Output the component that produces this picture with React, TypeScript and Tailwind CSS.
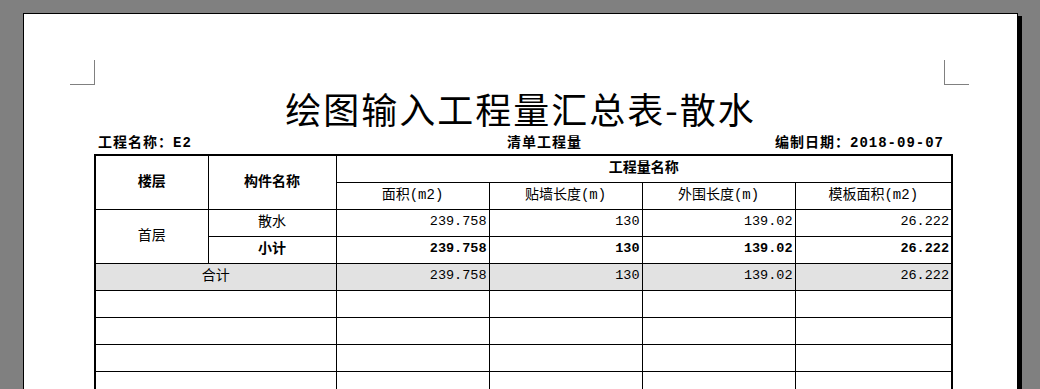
const mono = "font-['Liberation_Mono','Noto_Sans_CJK_SC',monospace]";

type Row = { values: string[] };

const firstFloor: Row = { values: ["239.758", "130", "139.02", "26.222"] };
const units = ["面积(m2)", "贴墙长度(m)", "外围长度(m)", "模板面积(m2)"];

function NumberCells({ values, bold }: { values: string[]; bold?: boolean }) {
  return (
    <>
      {values.map((v, i) => (
        <td key={i} className={`border border-black pr-[2px] text-right text-[13.5px] ${bold ? "font-bold" : ""}`}>
          {v}
        </td>
      ))}
    </>
  );
}

function CornerMark({ side }: { side: "left" | "right" }) {
  return (
    <div
      className={`h-[25px] w-[25px] border-b border-[#808080] ${side === "left" ? "border-r" : "border-l"}`}
    />
  );
}

export default function App() {
  return (
    <div className="h-[389px] w-[1040px] overflow-hidden bg-[#808080] pt-[13px] pl-[23px]">
      <div className="h-[400px] w-[995px] border border-black bg-white shadow-[4px_3px_0_#000]">
        <div className="flex justify-between pt-[46px] pr-[48px] pl-[46px]">
          <CornerMark side="left" />
          <CornerMark side="right" />
        </div>

        <h1 className="mt-[4px] h-[38px] text-center text-[36px] leading-[38px] tracking-[2px] font-['Noto_Sans_CJK_SC',sans-serif] text-black">
          绘图输入工程量汇总表-散水
        </h1>

        <div className={`ml-[70px] w-[857px] ${mono} text-black`}>
          <div className="mt-[7px] flex h-[18px] items-center text-[14px] leading-[18px] font-bold tracking-[1px]">
            <span className="w-[413px] pl-[4px]">工程名称：E2</span>
            <span>清单工程量</span>
            <span className="flex-1 pr-[7px] text-right">编制日期：2018-09-07</span>
          </div>

          <table className="mt-[2px] w-[857px] table-fixed border-collapse border-2 border-black text-[14px]">
            <colgroup>
              <col className="w-[113px]" />
              <col className="w-[128px]" />
              <col className="w-[153px]" />
              <col className="w-[153px]" />
              <col className="w-[153px]" />
              <col className="w-[157px]" />
            </colgroup>
            <thead>
              <tr className="h-[27px]">
                <th rowSpan={2} className="border border-black font-bold">楼层</th>
                <th rowSpan={2} className="border border-black font-bold">构件名称</th>
                <th colSpan={4} className="border border-black font-bold">工程量名称</th>
              </tr>
              <tr className="h-[27px]">
                {units.map((u) => (
                  <td key={u} className="border border-black text-center font-normal">{u}</td>
                ))}
              </tr>
            </thead>
            <tbody>
              <tr className="h-[27px]">
                <td rowSpan={2} className="border border-black text-center">首层</td>
                <td className="border border-black text-center">散水</td>
                <NumberCells values={firstFloor.values} />
              </tr>
              <tr className="h-[27px]">
                <td className="border border-black text-center font-bold">小计</td>
                <NumberCells values={firstFloor.values} bold />
              </tr>
              <tr className="h-[27px] bg-[#e2e2e2]">
                <td colSpan={2} className="border border-black text-center">合计</td>
                <NumberCells values={firstFloor.values} />
              </tr>
              {[0, 1, 2, 3].map((i) => (
                <tr key={i} className="h-[27px]">
                  <td colSpan={2} className="border border-black" />
                  <td className="border border-black" />
                  <td className="border border-black" />
                  <td className="border border-black" />
                  <td className="border border-black" />
                </tr>
              ))}
            </tbody>
          </table>
        </div>
      </div>
    </div>
  );
}
